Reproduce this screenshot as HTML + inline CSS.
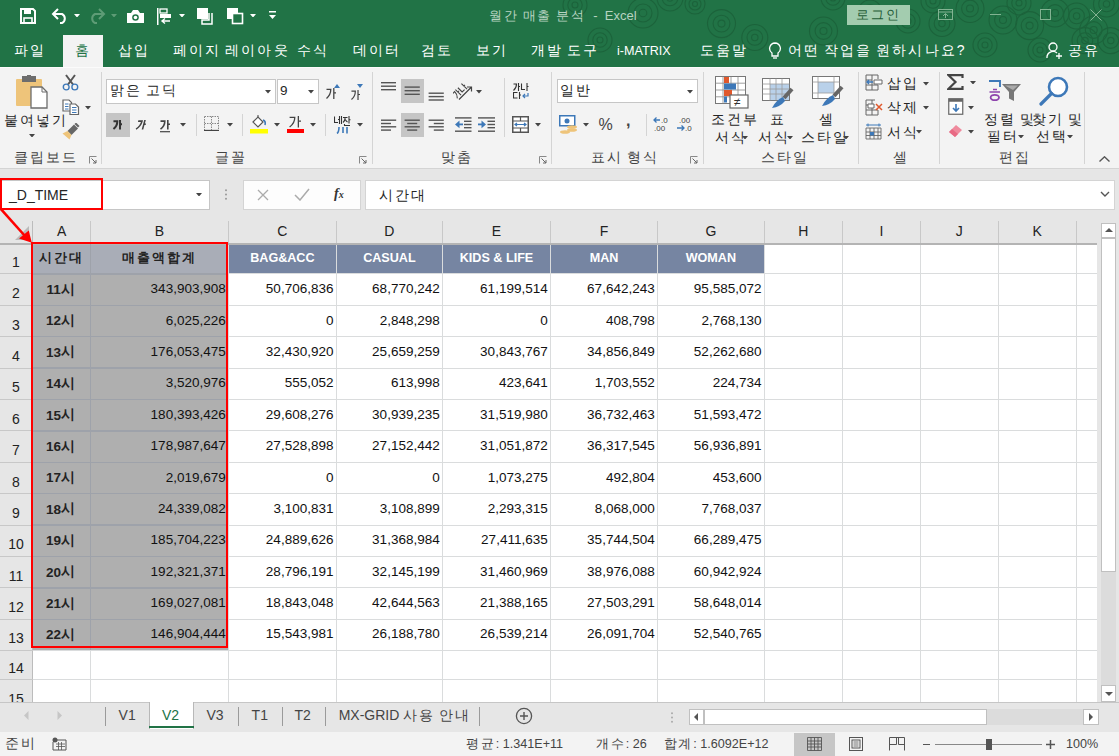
<!DOCTYPE html>
<html><head><meta charset="utf-8"><style>
*{margin:0;padding:0}
body{width:1119px;height:756px;overflow:hidden;position:relative;background:#e6e6e6;font-family:"Liberation Sans",sans-serif;}
.ab{position:absolute}
.t{position:absolute;white-space:nowrap}
.ko{letter-spacing:0.15em}
.ch{position:absolute;top:-1px;height:22px;line-height:22px;text-align:center;font-size:14px;color:#222}
.rh{position:absolute;left:0;width:32px;text-align:center;font-size:14px;color:#222;display:flex;align-items:flex-end;justify-content:center;padding-bottom:4px;box-sizing:border-box}
.cell{position:absolute;display:flex;align-items:center;font-size:13.5px;color:#111;white-space:nowrap;box-sizing:border-box}
.cell.num{justify-content:flex-end;padding-bottom:1.6px}
.cell.ctr{justify-content:center;font-weight:bold;color:#222}
.cell.hd{justify-content:center;font-weight:bold;color:#fff;font-size:12.6px}
.cell.hd.sel{color:#222}
</style></head>
<body>
<div class="ab" style="left:0px;top:0px;width:1119px;height:67px;background:#217346"></div>
<svg class="ab" style="left:540px;top:0px;" width="579" height="67" viewBox="0 0 579 67"><circle cx="103.0" cy="13.0" r="3.8" fill="none" stroke="#1c633b" stroke-width="1.1"/><circle cx="103.0" cy="13.0" r="9.0" fill="none" stroke="#1c633b" stroke-width="1.1"/><circle cx="103.0" cy="13.0" r="15.0" fill="none" stroke="#1c633b" stroke-width="1.1"/><circle cx="130.0" cy="-2.0" r="3.2" fill="none" stroke="#1c633b" stroke-width="1.1"/><circle cx="130.0" cy="-2.0" r="7.8" fill="none" stroke="#1c633b" stroke-width="1.1"/><circle cx="130.0" cy="-2.0" r="13.0" fill="none" stroke="#1c633b" stroke-width="1.1"/><circle cx="181.5" cy="23.6" r="3.5" fill="none" stroke="#1c633b" stroke-width="1.1"/><circle cx="181.5" cy="23.6" r="8.4" fill="none" stroke="#1c633b" stroke-width="1.1"/><circle cx="181.5" cy="23.6" r="14.0" fill="none" stroke="#1c633b" stroke-width="1.1"/><circle cx="214.8" cy="37.5" r="3.2" fill="none" stroke="#1c633b" stroke-width="1.1"/><circle cx="214.8" cy="37.5" r="7.8" fill="none" stroke="#1c633b" stroke-width="1.1"/><circle cx="214.8" cy="37.5" r="13.0" fill="none" stroke="#1c633b" stroke-width="1.1"/><circle cx="155.0" cy="4.0" r="2.5" fill="none" stroke="#1c633b" stroke-width="1.1"/><circle cx="155.0" cy="4.0" r="6.0" fill="none" stroke="#1c633b" stroke-width="1.1"/><circle cx="155.0" cy="4.0" r="10.0" fill="none" stroke="#1c633b" stroke-width="1.1"/><circle cx="283.5" cy="31.0" r="3.5" fill="none" stroke="#1c633b" stroke-width="1.1"/><circle cx="283.5" cy="31.0" r="8.4" fill="none" stroke="#1c633b" stroke-width="1.1"/><circle cx="283.5" cy="31.0" r="14.0" fill="none" stroke="#1c633b" stroke-width="1.1"/><circle cx="293.0" cy="-2.0" r="3.0" fill="none" stroke="#1c633b" stroke-width="1.1"/><circle cx="293.0" cy="-2.0" r="7.2" fill="none" stroke="#1c633b" stroke-width="1.1"/><circle cx="293.0" cy="-2.0" r="12.0" fill="none" stroke="#1c633b" stroke-width="1.1"/><circle cx="330.0" cy="12.0" r="3.0" fill="none" stroke="#1c633b" stroke-width="1.1"/><circle cx="330.0" cy="12.0" r="7.2" fill="none" stroke="#1c633b" stroke-width="1.1"/><circle cx="330.0" cy="12.0" r="12.0" fill="none" stroke="#1c633b" stroke-width="1.1"/><circle cx="368.0" cy="21.0" r="3.0" fill="none" stroke="#1c633b" stroke-width="1.1"/><circle cx="368.0" cy="21.0" r="7.2" fill="none" stroke="#1c633b" stroke-width="1.1"/><circle cx="368.0" cy="21.0" r="12.0" fill="none" stroke="#1c633b" stroke-width="1.1"/><circle cx="393.0" cy="1.0" r="3.0" fill="none" stroke="#1c633b" stroke-width="1.1"/><circle cx="393.0" cy="1.0" r="7.2" fill="none" stroke="#1c633b" stroke-width="1.1"/><circle cx="393.0" cy="1.0" r="12.0" fill="none" stroke="#1c633b" stroke-width="1.1"/><circle cx="402.0" cy="23.5" r="3.2" fill="none" stroke="#1c633b" stroke-width="1.1"/><circle cx="402.0" cy="23.5" r="7.8" fill="none" stroke="#1c633b" stroke-width="1.1"/><circle cx="402.0" cy="23.5" r="13.0" fill="none" stroke="#1c633b" stroke-width="1.1"/><circle cx="430.0" cy="8.5" r="3.5" fill="none" stroke="#1c633b" stroke-width="1.1"/><circle cx="430.0" cy="8.5" r="8.4" fill="none" stroke="#1c633b" stroke-width="1.1"/><circle cx="430.0" cy="8.5" r="14.0" fill="none" stroke="#1c633b" stroke-width="1.1"/><circle cx="463.0" cy="20.0" r="3.5" fill="none" stroke="#1c633b" stroke-width="1.1"/><circle cx="463.0" cy="20.0" r="8.4" fill="none" stroke="#1c633b" stroke-width="1.1"/><circle cx="463.0" cy="20.0" r="14.0" fill="none" stroke="#1c633b" stroke-width="1.1"/><circle cx="479.0" cy="3.0" r="3.0" fill="none" stroke="#1c633b" stroke-width="1.1"/><circle cx="479.0" cy="3.0" r="7.2" fill="none" stroke="#1c633b" stroke-width="1.1"/><circle cx="479.0" cy="3.0" r="12.0" fill="none" stroke="#1c633b" stroke-width="1.1"/><circle cx="489.6" cy="25.6" r="3.5" fill="none" stroke="#1c633b" stroke-width="1.1"/><circle cx="489.6" cy="25.6" r="8.4" fill="none" stroke="#1c633b" stroke-width="1.1"/><circle cx="489.6" cy="25.6" r="14.0" fill="none" stroke="#1c633b" stroke-width="1.1"/><circle cx="515.0" cy="13.0" r="3.5" fill="none" stroke="#1c633b" stroke-width="1.1"/><circle cx="515.0" cy="13.0" r="8.4" fill="none" stroke="#1c633b" stroke-width="1.1"/><circle cx="515.0" cy="13.0" r="14.0" fill="none" stroke="#1c633b" stroke-width="1.1"/><circle cx="536.6" cy="16.0" r="3.2" fill="none" stroke="#1c633b" stroke-width="1.1"/><circle cx="536.6" cy="16.0" r="7.8" fill="none" stroke="#1c633b" stroke-width="1.1"/><circle cx="536.6" cy="16.0" r="13.0" fill="none" stroke="#1c633b" stroke-width="1.1"/><circle cx="566.5" cy="4.0" r="3.2" fill="none" stroke="#1c633b" stroke-width="1.1"/><circle cx="566.5" cy="4.0" r="7.8" fill="none" stroke="#1c633b" stroke-width="1.1"/><circle cx="566.5" cy="4.0" r="13.0" fill="none" stroke="#1c633b" stroke-width="1.1"/><circle cx="553.7" cy="30.0" r="3.5" fill="none" stroke="#1c633b" stroke-width="1.1"/><circle cx="553.7" cy="30.0" r="8.4" fill="none" stroke="#1c633b" stroke-width="1.1"/><circle cx="553.7" cy="30.0" r="14.0" fill="none" stroke="#1c633b" stroke-width="1.1"/><circle cx="570.8" cy="40.6" r="3.2" fill="none" stroke="#1c633b" stroke-width="1.1"/><circle cx="570.8" cy="40.6" r="7.8" fill="none" stroke="#1c633b" stroke-width="1.1"/><circle cx="570.8" cy="40.6" r="13.0" fill="none" stroke="#1c633b" stroke-width="1.1"/><circle cx="545.0" cy="40.6" r="3.2" fill="none" stroke="#1c633b" stroke-width="1.1"/><circle cx="545.0" cy="40.6" r="7.8" fill="none" stroke="#1c633b" stroke-width="1.1"/><circle cx="545.0" cy="40.6" r="13.0" fill="none" stroke="#1c633b" stroke-width="1.1"/><circle cx="445.0" cy="45.0" r="3.0" fill="none" stroke="#1c633b" stroke-width="1.1"/><circle cx="445.0" cy="45.0" r="7.2" fill="none" stroke="#1c633b" stroke-width="1.1"/><circle cx="445.0" cy="45.0" r="12.0" fill="none" stroke="#1c633b" stroke-width="1.1"/><circle cx="500.0" cy="50.0" r="3.0" fill="none" stroke="#1c633b" stroke-width="1.1"/><circle cx="500.0" cy="50.0" r="7.2" fill="none" stroke="#1c633b" stroke-width="1.1"/><circle cx="500.0" cy="50.0" r="12.0" fill="none" stroke="#1c633b" stroke-width="1.1"/><circle cx="60.0" cy="40.0" r="3.0" fill="none" stroke="#1c633b" stroke-width="1.1"/><circle cx="60.0" cy="40.0" r="7.2" fill="none" stroke="#1c633b" stroke-width="1.1"/><circle cx="60.0" cy="40.0" r="12.0" fill="none" stroke="#1c633b" stroke-width="1.1"/><circle cx="35.0" cy="5.0" r="3.0" fill="none" stroke="#1c633b" stroke-width="1.1"/><circle cx="35.0" cy="5.0" r="7.2" fill="none" stroke="#1c633b" stroke-width="1.1"/><circle cx="35.0" cy="5.0" r="12.0" fill="none" stroke="#1c633b" stroke-width="1.1"/></svg>
<svg class="ab" style="left:20px;top:8px;" width="16" height="16" viewBox="0 0 16 16"><path d="M1 1H13L15 3V15H1Z" fill="none" stroke="#fff" stroke-width="2"/><rect x="4" y="2" width="7" height="4" fill="#fff"/><rect x="4" y="10" width="8" height="5" fill="none" stroke="#fff" stroke-width="1.6"/></svg>
<svg class="ab" style="left:51px;top:8px;" width="18" height="16" viewBox="0 0 18 16"><path d="M3 6H11A5 5 0 0 1 11 15H9" fill="none" stroke="#fff" stroke-width="2"/><path d="M7 1L2 6L7 11" fill="none" stroke="#fff" stroke-width="2"/></svg>
<svg class="ab" style="left:73.5px;top:13.5px;" width="6" height="3.5" viewBox="0 0 6 3.5"><path d="M0 0H6L3 3.5Z" fill="#fff"/></svg>
<svg class="ab" style="left:88px;top:8px;" width="18" height="16" viewBox="0 0 18 16"><path d="M15 6H7A5 5 0 0 0 7 15H9" fill="none" stroke="#5e9c76" stroke-width="2"/><path d="M11 1L16 6L11 11" fill="none" stroke="#5e9c76" stroke-width="2"/></svg>
<svg class="ab" style="left:111px;top:13.5px;" width="6" height="3.5" viewBox="0 0 6 3.5"><path d="M0 0H6L3 3.5Z" fill="#5e9c76"/></svg>
<svg class="ab" style="left:126px;top:9px;" width="19" height="15" viewBox="0 0 19 15"><path d="M1 4H5L7 1H12L14 4H18V14H1Z" fill="#fff"/><circle cx="9.5" cy="8.5" r="3.3" fill="#217346"/><circle cx="9.5" cy="8.5" r="1.8" fill="#fff"/></svg>
<svg class="ab" style="left:157px;top:8px;" width="15" height="17" viewBox="0 0 15 17"><rect x="0" y="0" width="1.5" height="17" fill="#fff"/><rect x="3" y="1" width="7" height="4" fill="none" stroke="#fff" stroke-width="1.3"/><rect x="3" y="6" width="11" height="4" fill="#fff"/><path d="M13 13H5M8 10.5L5 13L8 15.5" fill="none" stroke="#fff" stroke-width="1.4"/></svg>
<svg class="ab" style="left:178.5px;top:13.5px;" width="6" height="3.5" viewBox="0 0 6 3.5"><path d="M0 0H6L3 3.5Z" fill="#fff"/></svg>
<svg class="ab" style="left:197px;top:8px;" width="16" height="17" viewBox="0 0 16 17"><rect x="0" y="0" width="11" height="11" fill="#fff"/><path d="M12 5V12H5V16H15V5" fill="none" stroke="#fff" stroke-width="1.5"/></svg>
<svg class="ab" style="left:227px;top:8px;" width="17" height="17" viewBox="0 0 17 17"><rect x="0" y="0" width="11" height="11" fill="#fff"/><rect x="5.5" y="5.5" width="10" height="10" fill="#217346" stroke="#fff" stroke-width="1.6"/></svg>
<svg class="ab" style="left:249.5px;top:13.5px;" width="6" height="3.5" viewBox="0 0 6 3.5"><path d="M0 0H6L3 3.5Z" fill="#fff"/></svg>
<svg class="ab" style="left:269px;top:11px;" width="8" height="9" viewBox="0 0 8 9"><rect x="0" y="0" width="7" height="1.5" fill="#fff"/><path d="M0 4H7L3.5 8Z" fill="#fff"/></svg>
<div class="t" style="left:489px;top:8.2px;font-size:13px;line-height:15.6px;color:#b7d3c1;font-weight:normal;"><span class="ko">월간</span> <span class="ko">매출</span> <span class="ko">분석</span> &nbsp;- &nbsp;Excel</div>
<div class="ab" style="left:847px;top:5px;width:63px;height:20px;background:#a3ccaf"></div>
<div class="t" style="left:847px;top:7.2px;font-size:13px;line-height:15.6px;color:#1f5b36;font-weight:normal;width:63px;text-align:center;letter-spacing:1px"><span class="ko">로그인</span></div>
<svg class="ab" style="left:938px;top:9px;" width="15" height="11" viewBox="0 0 15 11"><rect x="0.5" y="0.5" width="14" height="10" fill="none" stroke="#82b392" stroke-width="1"/><path d="M1 3H14M7.5 9V5M5 7L7.5 4.5L10 7" fill="none" stroke="#82b392" stroke-width="1"/></svg>
<div class="ab" style="left:990px;top:14px;width:11px;height:1px;background:#82b392"></div>
<svg class="ab" style="left:1040px;top:9px;" width="11" height="11" viewBox="0 0 11 11"><rect x="0.5" y="0.5" width="10" height="10" fill="none" stroke="#82b392" stroke-width="1"/></svg>
<svg class="ab" style="left:1090px;top:9px;" width="12" height="12" viewBox="0 0 12 12"><path d="M0.5 0.5L11.5 11.5M11.5 0.5L0.5 11.5" stroke="#82b392" stroke-width="1"/></svg>
<div class="ab" style="left:63px;top:35px;width:40px;height:32px;background:#f3f3f3"></div>
<div class="t" style="left:14.3px;top:42.1px;font-size:14px;line-height:16.8px;color:#ffffff;font-weight:normal;"><span class="ko">파일</span></div>
<div class="t" style="left:75px;top:42.1px;font-size:14px;line-height:16.8px;color:#217346;font-weight:normal;"><span class="ko">홈</span></div>
<div class="t" style="left:118px;top:42.1px;font-size:14px;line-height:16.8px;color:#ffffff;font-weight:normal;"><span class="ko">삽입</span></div>
<div class="t" style="left:173px;top:42.1px;font-size:14px;line-height:16.8px;color:#ffffff;font-weight:normal;"><span class="ko">페이지</span> <span class="ko">레이아웃</span></div>
<div class="t" style="left:297px;top:42.1px;font-size:14px;line-height:16.8px;color:#ffffff;font-weight:normal;"><span class="ko">수식</span></div>
<div class="t" style="left:353px;top:42.1px;font-size:14px;line-height:16.8px;color:#ffffff;font-weight:normal;"><span class="ko">데이터</span></div>
<div class="t" style="left:421px;top:42.1px;font-size:14px;line-height:16.8px;color:#ffffff;font-weight:normal;"><span class="ko">검토</span></div>
<div class="t" style="left:476px;top:42.1px;font-size:14px;line-height:16.8px;color:#ffffff;font-weight:normal;"><span class="ko">보기</span></div>
<div class="t" style="left:531px;top:42.1px;font-size:14px;line-height:16.8px;color:#ffffff;font-weight:normal;"><span class="ko">개발</span> <span class="ko">도구</span></div>
<div class="t" style="left:617px;top:42.1px;font-size:14px;line-height:16.8px;color:#ffffff;font-weight:normal;"><span style="font-size:12.6px">i-MATRIX</span></div>
<div class="t" style="left:700px;top:42.1px;font-size:14px;line-height:16.8px;color:#ffffff;font-weight:normal;"><span class="ko">도움말</span></div>
<svg class="ab" style="left:768px;top:42px;" width="14" height="18" viewBox="0 0 14 18"><path d="M7 1A5.5 5.5 0 0 0 4 11V14H10V11A5.5 5.5 0 0 0 7 1Z" fill="none" stroke="#fff" stroke-width="1.3"/><path d="M5 16H9" stroke="#fff" stroke-width="1.3"/></svg>
<div class="t" style="left:788px;top:42.1px;font-size:14px;line-height:16.8px;color:#ffffff;font-weight:normal;"><span class="ko">어떤</span> <span class="ko">작업을</span> <span class="ko">원하시나요</span>?</div>
<svg class="ab" style="left:1046px;top:42px;" width="18" height="17" viewBox="0 0 18 17"><circle cx="7" cy="5" r="4" fill="none" stroke="#fff" stroke-width="1.3"/><path d="M1 16A6 6 0 0 1 11 11" fill="none" stroke="#fff" stroke-width="1.3"/><path d="M13 11V17M10 14H16" stroke="#fff" stroke-width="1.3"/></svg>
<div class="t" style="left:1068px;top:42.1px;font-size:14px;line-height:16.8px;color:#ffffff;font-weight:normal;"><span class="ko">공유</span></div>
<div class="ab" style="left:0px;top:67px;width:1119px;height:102px;background:#f3f3f3;border-bottom:1px solid #d4d4d4;border-top:1px solid #fbfbfb;box-sizing:border-box"></div>
<div class="ab" style="left:101.3px;top:72px;width:1px;height:92px;background:#d4d4d4"></div>
<div class="ab" style="left:372px;top:72px;width:1px;height:92px;background:#d4d4d4"></div>
<div class="ab" style="left:551.3px;top:72px;width:1px;height:92px;background:#d4d4d4"></div>
<div class="ab" style="left:703px;top:72px;width:1px;height:92px;background:#d4d4d4"></div>
<div class="ab" style="left:857.6px;top:72px;width:1px;height:92px;background:#d4d4d4"></div>
<div class="ab" style="left:938.7px;top:72px;width:1px;height:92px;background:#d4d4d4"></div>
<div class="ab" style="left:1083.8px;top:72px;width:1px;height:92px;background:#d4d4d4"></div>
<div class="ab" style="left:195.6px;top:114px;width:1px;height:22px;background:#d4d4d4"></div>
<div class="ab" style="left:241.8px;top:114px;width:1px;height:22px;background:#d4d4d4"></div>
<div class="ab" style="left:325.3px;top:114px;width:1px;height:22px;background:#d4d4d4"></div>
<div class="ab" style="left:503.8px;top:78px;width:1px;height:59px;background:#d4d4d4"></div>
<div class="ab" style="left:645.6px;top:114px;width:1px;height:22px;background:#d4d4d4"></div>
<div class="t" style="left:14.3px;top:149.9px;font-size:13.5px;line-height:16.2px;color:#444;font-weight:normal;"><span class="ko">클립보드</span></div>
<div class="t" style="left:215px;top:149.9px;font-size:13.5px;line-height:16.2px;color:#444;font-weight:normal;"><span class="ko">글꼴</span></div>
<div class="t" style="left:440.5px;top:149.9px;font-size:13.5px;line-height:16.2px;color:#444;font-weight:normal;"><span class="ko">맞춤</span></div>
<div class="t" style="left:590.7px;top:149.9px;font-size:13.5px;line-height:16.2px;color:#444;font-weight:normal;"><span class="ko">표시</span> <span class="ko">형식</span></div>
<div class="t" style="left:761px;top:149.9px;font-size:13.5px;line-height:16.2px;color:#444;font-weight:normal;"><span class="ko">스타일</span></div>
<div class="t" style="left:892.7px;top:149.9px;font-size:13.5px;line-height:16.2px;color:#444;font-weight:normal;"><span class="ko">셀</span></div>
<div class="t" style="left:999px;top:149.9px;font-size:13.5px;line-height:16.2px;color:#444;font-weight:normal;"><span class="ko">편집</span></div>
<svg class="ab" style="left:88.5px;top:156px;" width="8" height="8" viewBox="0 0 8 8"><path d="M0.5 7.5V0.5H7.5" fill="none" stroke="#888" stroke-width="1"/><path d="M2.5 2.5L7 7M7 4V7H4" fill="none" stroke="#666" stroke-width="1"/></svg>
<svg class="ab" style="left:359px;top:156px;" width="8" height="8" viewBox="0 0 8 8"><path d="M0.5 7.5V0.5H7.5" fill="none" stroke="#888" stroke-width="1"/><path d="M2.5 2.5L7 7M7 4V7H4" fill="none" stroke="#666" stroke-width="1"/></svg>
<svg class="ab" style="left:539px;top:156px;" width="8" height="8" viewBox="0 0 8 8"><path d="M0.5 7.5V0.5H7.5" fill="none" stroke="#888" stroke-width="1"/><path d="M2.5 2.5L7 7M7 4V7H4" fill="none" stroke="#666" stroke-width="1"/></svg>
<svg class="ab" style="left:690px;top:156px;" width="8" height="8" viewBox="0 0 8 8"><path d="M0.5 7.5V0.5H7.5" fill="none" stroke="#888" stroke-width="1"/><path d="M2.5 2.5L7 7M7 4V7H4" fill="none" stroke="#666" stroke-width="1"/></svg>
<svg class="ab" style="left:15px;top:75px;" width="33" height="35" viewBox="0 0 33 35"><rect x="1" y="4" width="26" height="27" rx="1" fill="#eec47a"/><path d="M7 1H21V7H7Z" fill="#6d6d6d"/><rect x="12" y="0" width="4" height="3" fill="#6d6d6d"/><path d="M16 12H27L32 17V33H16Z" fill="#fff" stroke="#6d6d6d" stroke-width="1.3"/><path d="M27 12V17H32" fill="none" stroke="#6d6d6d" stroke-width="1"/></svg>
<div class="t" style="left:3.6px;top:111.6px;font-size:14px;line-height:16.8px;color:#262626;font-weight:normal;"><span class="ko">붙여넣기</span></div>
<svg class="ab" style="left:29px;top:133.5px;" width="6" height="3.5" viewBox="0 0 6 3.5"><path d="M0 0H6L3 3.5Z" fill="#444"/></svg>
<svg class="ab" style="left:62px;top:74px;" width="17" height="17" viewBox="0 0 17 17"><path d="M4 1L11 10.5M13 1L6 10.5" stroke="#555" stroke-width="2"/><circle cx="4.2" cy="13" r="2.9" fill="none" stroke="#3d78b8" stroke-width="1.4"/><circle cx="12.8" cy="13" r="2.9" fill="none" stroke="#3d78b8" stroke-width="1.4"/></svg>
<svg class="ab" style="left:61.5px;top:99px;" width="18" height="16" viewBox="0 0 18 16"><path d="M1 1H7L9.5 3.5V12H1Z" fill="#fff" stroke="#666" stroke-width="1.2"/><path d="M8 5H13.5L16.5 8V15.5H8Z" fill="#fff" stroke="#666" stroke-width="1.2"/><path d="M3 5H6.5M3 7.5H6.5M3 10H6.5M10 8.5H14.5M10 11H14.5M10 13.5H14.5" stroke="#3d78b8" stroke-width="1"/></svg>
<svg class="ab" style="left:85px;top:106.0px;" width="6" height="3.5" viewBox="0 0 6 3.5"><path d="M0 0H6L3 3.5Z" fill="#444"/></svg>
<svg class="ab" style="left:62px;top:123px;" width="18" height="17" viewBox="0 0 18 17"><path d="M5.5 8L12 1.5L16 5.5L9.5 12Z" fill="#666"/><path d="M12.5 1L14 -0.5L17.5 3L16 4.5Z" fill="#666"/><path d="M0.5 10.5L5.5 8L9.5 12L7.5 16.5Z" fill="#eec47a"/></svg>
<div class="ab" style="left:106px;top:79px;width:170px;height:24.5px;background:#fff;border:1px solid #c6c6c6;box-sizing:border-box"></div>
<div class="t" style="left:110px;top:83.4px;font-size:13.5px;line-height:16.2px;color:#262626;font-weight:normal;"><span class="ko">맑은</span> <span class="ko">고딕</span></div>
<svg class="ab" style="left:265px;top:90.0px;" width="6" height="3.5" viewBox="0 0 6 3.5"><path d="M0 0H6L3 3.5Z" fill="#444"/></svg>
<div class="ab" style="left:276.5px;top:79px;width:42px;height:24.5px;background:#fff;border:1px solid #c6c6c6;box-sizing:border-box"></div>
<div class="t" style="left:280px;top:83.4px;font-size:13.5px;line-height:16.2px;color:#262626;font-weight:normal;">9</div>
<svg class="ab" style="left:308px;top:90.0px;" width="6" height="3.5" viewBox="0 0 6 3.5"><path d="M0 0H6L3 3.5Z" fill="#444"/></svg>
<svg class="ab" style="left:326px;top:88px;overflow:visible" width="13" height="15" viewBox="0 0 13 15"><g><path d="M0.50 1.32H4.80Q4.80 6.82 0.50 10.45M7.80 0V11.00M7.80 4.95H10.00" fill="none" stroke="#444" stroke-width="1.3"/></g></svg>
<svg class="ab" style="left:333.5px;top:83.5px;" width="6" height="4" viewBox="0 0 6 4"><path d="M0 4H6L3 0Z" fill="#3d78b8"/></svg>
<svg class="ab" style="left:351px;top:90px;overflow:visible" width="12" height="14" viewBox="0 0 12 14"><g><path d="M0.45 1.20H4.32Q4.32 6.20 0.45 9.50M7.02 0V10.00M7.02 4.50H9.00" fill="none" stroke="#444" stroke-width="1.2"/></g></svg>
<svg class="ab" style="left:357px;top:84px;" width="6" height="4" viewBox="0 0 6 4"><path d="M0 0H6L3 4Z" fill="#3d78b8"/></svg>
<div class="ab" style="left:106px;top:112.5px;width:23.5px;height:24.5px;background:#c5c5c5"></div>
<svg class="ab" style="left:113px;top:119.6px;overflow:visible" width="12" height="13.5" viewBox="0 0 12 13.5"><g><path d="M0.45 1.14H4.32Q4.32 5.89 0.45 9.03M7.02 0V9.50M7.02 4.28H9.00" fill="none" stroke="#333" stroke-width="2"/></g></svg>
<svg class="ab" style="left:138px;top:119.6px;overflow:visible" width="12" height="13.5" viewBox="0 0 12 13.5"><g transform="skewX(-15)"><path d="M0.45 1.14H4.32Q4.32 5.89 0.45 9.03M7.02 0V9.50M7.02 4.28H9.00" fill="none" stroke="#444" stroke-width="1.6"/></g></svg>
<svg class="ab" style="left:160px;top:119.6px;overflow:visible" width="13" height="13.5" viewBox="0 0 13 13.5"><g><path d="M0.50 1.14H4.80Q4.80 5.89 0.50 9.03M7.80 0V9.50M7.80 4.28H10.00" fill="none" stroke="#444" stroke-width="1.6"/></g><path d="M0 11.70H10.00" stroke="#444" stroke-width="1.2"/></svg>
<svg class="ab" style="left:180px;top:123.0px;" width="6" height="3.5" viewBox="0 0 6 3.5"><path d="M0 0H6L3 3.5Z" fill="#444"/></svg>
<svg class="ab" style="left:204px;top:116px;" width="15" height="15" viewBox="0 0 15 15"><path d="M0.5 0.5H14.5V14.5M7.5 0.5V14.5M0.5 7.5H14.5M0.5 0.5V14.5" fill="none" stroke="#888" stroke-width="1" stroke-dasharray="1.5 1"/><path d="M0 14.5H15" stroke="#444" stroke-width="1.3"/></svg>
<svg class="ab" style="left:227px;top:123.0px;" width="6" height="3.5" viewBox="0 0 6 3.5"><path d="M0 0H6L3 3.5Z" fill="#444"/></svg>
<svg class="ab" style="left:250px;top:115px;" width="18" height="19" viewBox="0 0 18 19"><path d="M3 7L8 2L13 7L8 12Z" fill="#fff" stroke="#555" stroke-width="1.2"/><path d="M8 2V0" stroke="#555" stroke-width="1.1"/><path d="M13 5Q16 6 15 10" fill="none" stroke="#3d78b8" stroke-width="1.6"/><rect x="0" y="14" width="18" height="4.5" fill="#ffff00"/></svg>
<svg class="ab" style="left:273.6px;top:123.0px;" width="6" height="3.5" viewBox="0 0 6 3.5"><path d="M0 0H6L3 3.5Z" fill="#444"/></svg>
<svg class="ab" style="left:288.5px;top:115.5px;overflow:visible" width="15" height="15.5" viewBox="0 0 15 15.5"><g><path d="M0.60 1.38H5.76Q5.76 7.13 0.60 10.92M9.36 0V11.50M9.36 5.17H12.00" fill="none" stroke="#444" stroke-width="1.3"/></g></svg>
<div class="ab" style="left:287px;top:129px;width:17px;height:4.2px;background:#ff0000"></div>
<svg class="ab" style="left:310.4px;top:123.0px;" width="6" height="3.5" viewBox="0 0 6 3.5"><path d="M0 0H6L3 3.5Z" fill="#444"/></svg>
<svg class="ab" style="left:334px;top:116px;" width="17" height="18" viewBox="0 0 17 18"><path d="M0.5 0.5V6.5H4M5.5 0V8M7.5 0V8M5.5 3.5H4" fill="none" stroke="#333" stroke-width="1.1"/><path d="M9 1.5H13.5M11.2 1.5Q11 5 9 6.5M11.2 3.5Q12 5 13.5 6M15 0V7.5M15 3.8H16.5M10.5 8V9.5H16" fill="none" stroke="#333" stroke-width="1.1"/><path d="M5 11Q5 16 3 17.5M9 11V17M13 11V17.5" fill="none" stroke="#3d78b8" stroke-width="1.6"/></svg>
<svg class="ab" style="left:356.8px;top:123.0px;" width="6" height="3.5" viewBox="0 0 6 3.5"><path d="M0 0H6L3 3.5Z" fill="#444"/></svg>
<div class="ab" style="left:400.6px;top:79.2px;width:23.4px;height:24.3px;background:#c5c5c5"></div>
<div class="ab" style="left:400.6px;top:112.5px;width:23.4px;height:24.5px;background:#c5c5c5"></div>
<svg class="ab" style="left:380px;top:80px;" width="120" height="60" viewBox="0 0 120 60"><rect x="1.0" y="2.0" width="15.0" height="1.4" fill="#555"/><rect x="24.6" y="6.4" width="15.2" height="1.4" fill="#555"/><rect x="48.6" y="12.5" width="15.2" height="1.4" fill="#555"/><rect x="1.0" y="5.5" width="15.0" height="1.4" fill="#555"/><rect x="24.6" y="10.0" width="15.2" height="1.4" fill="#555"/><rect x="48.6" y="15.9" width="15.2" height="1.4" fill="#555"/><rect x="1.0" y="9.0" width="15.0" height="1.4" fill="#555"/><rect x="24.6" y="13.6" width="15.2" height="1.4" fill="#555"/><rect x="48.6" y="19.3" width="15.2" height="1.4" fill="#555"/><rect x="1.0" y="39.5" width="15.2" height="1.4" fill="#555"/><rect x="24.6" y="39.5" width="15.2" height="1.4" fill="#555"/><rect x="48.6" y="39.5" width="15.2" height="1.4" fill="#555"/><rect x="1.0" y="42.8" width="10.0" height="1.4" fill="#555"/><rect x="27.2" y="42.8" width="10.0" height="1.4" fill="#555"/><rect x="53.8" y="42.8" width="10.0" height="1.4" fill="#555"/><rect x="1.0" y="46.1" width="15.2" height="1.4" fill="#555"/><rect x="24.6" y="46.1" width="15.2" height="1.4" fill="#555"/><rect x="48.6" y="46.1" width="15.2" height="1.4" fill="#555"/><rect x="1.0" y="49.4" width="10.0" height="1.4" fill="#555"/><rect x="27.2" y="49.4" width="10.0" height="1.4" fill="#555"/><rect x="53.8" y="49.4" width="10.0" height="1.4" fill="#555"/><rect x="75.0" y="37.2" width="16.5" height="1.4" fill="#555"/><rect x="75.0" y="50.5" width="16.5" height="1.4" fill="#555"/><rect x="84.0" y="40.6" width="7.5" height="1.4" fill="#555"/><rect x="84.0" y="43.8" width="7.5" height="1.4" fill="#555"/><rect x="84.0" y="47.0" width="7.5" height="1.4" fill="#555"/><path d="M75 44.4L79.5 40.6V48.2Z" fill="#3d78b8"/><rect x="78.0" y="43.5" width="5.0" height="1.8" fill="#3d78b8"/><rect x="98.0" y="37.2" width="17.0" height="1.4" fill="#555"/><rect x="98.0" y="50.5" width="17.0" height="1.4" fill="#555"/><rect x="107.5" y="40.6" width="7.5" height="1.4" fill="#555"/><rect x="107.5" y="43.8" width="7.5" height="1.4" fill="#555"/><rect x="107.5" y="47.0" width="7.5" height="1.4" fill="#555"/><path d="M106 44.4L101.5 40.6V48.2Z" fill="#3d78b8"/><rect x="98.0" y="43.5" width="5.0" height="1.8" fill="#3d78b8"/></svg>
<svg class="ab" style="left:453px;top:82px;" width="20" height="18" viewBox="0 0 20 18"><g transform="rotate(-45 7 10)"><path d="M0.5 6H3.5Q3.5 10 0.5 12.5M5.5 5V13M5.5 8.5H7M8.5 5.5V11.5H12M14 5V13M14 8.5H15.5" fill="none" stroke="#444" stroke-width="1.1"/></g><path d="M6 17.5L18 5.5M14 5H18.5V9.5" fill="none" stroke="#444" stroke-width="1.2"/></svg>
<svg class="ab" style="left:475.7px;top:90.0px;" width="6" height="3.5" viewBox="0 0 6 3.5"><path d="M0 0H6L3 3.5Z" fill="#444"/></svg>
<svg class="ab" style="left:512.5px;top:83px;" width="17" height="16" viewBox="0 0 17 16"><path d="M0.5 1H3.5Q3.5 5 0.5 7.5M5.5 0V8M5.5 3.5H7M8.5 0.5V6.5H12M14 0V8M14 3.5H15.5M4.5 9.5H0.5V15H4.5M6.5 9V16M6.5 12H8" fill="none" stroke="#333" stroke-width="1.1"/></svg>
<svg class="ab" style="left:522px;top:92.5px;" width="8" height="6" viewBox="0 0 8 6"><path d="M6 0V3H1M3 1L1 3L3 5" fill="none" stroke="#3d78b8" stroke-width="1.2"/></svg>
<svg class="ab" style="left:511.5px;top:116px;" width="17" height="17" viewBox="0 0 17 17"><rect x="0.75" y="0.75" width="15.5" height="15.5" fill="#fff" stroke="#555" stroke-width="1.5"/><path d="M1 5H16M1 12H16M8.5 1V5M8.5 12V16" stroke="#555" stroke-width="1.2"/><path d="M3 8.5H14M5 7L3 8.5L5 10M12 7L14 8.5L12 10" fill="none" stroke="#3d78b8" stroke-width="1.2"/></svg>
<svg class="ab" style="left:535px;top:123.0px;" width="6" height="3.5" viewBox="0 0 6 3.5"><path d="M0 0H6L3 3.5Z" fill="#444"/></svg>
<div class="ab" style="left:556.5px;top:79.2px;width:141.2px;height:24.3px;background:#fff;border:1px solid #c6c6c6;box-sizing:border-box"></div>
<div class="t" style="left:560px;top:83.4px;font-size:13.5px;line-height:16.2px;color:#262626;font-weight:normal;"><span class="ko">일반</span></div>
<svg class="ab" style="left:686.6px;top:90.0px;" width="6" height="3.5" viewBox="0 0 6 3.5"><path d="M0 0H6L3 3.5Z" fill="#444"/></svg>
<svg class="ab" style="left:559px;top:115px;" width="19" height="19" viewBox="0 0 19 19"><rect x="0.75" y="0.75" width="15" height="10" fill="#fff" stroke="#3d78b8" stroke-width="1.5"/><circle cx="8" cy="6" r="2.5" fill="#3d78b8"/><ellipse cx="13" cy="12" rx="5" ry="1.8" fill="#eec47a"/><ellipse cx="13" cy="15" rx="5" ry="1.8" fill="#eec47a"/><ellipse cx="6" cy="17" rx="5" ry="1.8" fill="#eec47a"/></svg>
<svg class="ab" style="left:582.6px;top:123.0px;" width="6" height="3.5" viewBox="0 0 6 3.5"><path d="M0 0H6L3 3.5Z" fill="#444"/></svg>
<div class="t" style="left:598.4px;top:115.4px;font-size:16px;line-height:19.2px;color:#444;font-weight:normal;">%</div>
<div class="t" style="left:626px;top:111.4px;font-size:16px;line-height:19.2px;color:#444;font-weight:bold;">,</div>
<svg class="ab" style="left:653px;top:116px;" width="17" height="16" viewBox="0 0 17 16"><path d="M1 4H7M3.5 1.5L1 4L3.5 6.5" fill="none" stroke="#3d78b8" stroke-width="1.3"/><text x="8" y="7" font-size="8" fill="#444" font-family="Liberation Sans">.0</text><text x="1" y="15" font-size="8" fill="#444" font-family="Liberation Sans">.00</text></svg>
<svg class="ab" style="left:677px;top:116px;" width="17" height="16" viewBox="0 0 17 16"><text x="2" y="7" font-size="8" fill="#444" font-family="Liberation Sans">.00</text><path d="M0 12H7M4.5 9.5L7 12L4.5 14.5" fill="none" stroke="#3d78b8" stroke-width="1.3"/><text x="8" y="15" font-size="8" fill="#444" font-family="Liberation Sans">.0</text></svg>
<svg class="ab" style="left:715px;top:75.5px;" width="34" height="33" viewBox="0 0 34 33"><rect x="0.5" y="0.5" width="30" height="27" fill="#fff" stroke="#777" stroke-width="1"/><path d="M0.5 7.2H30.5" stroke="#888" stroke-width="0.8"/><path d="M0.5 14.0H30.5" stroke="#888" stroke-width="0.8"/><path d="M0.5 20.8H30.5" stroke="#888" stroke-width="0.8"/><path d="M8 0.5V27.5" stroke="#888" stroke-width="0.8"/><path d="M16 0.5V27.5" stroke="#888" stroke-width="0.8"/><path d="M23 0.5V27.5" stroke="#888" stroke-width="0.8"/><rect x="9" y="1" width="5" height="6" fill="#e0582c"/><rect x="9" y="7.5" width="12" height="6" fill="#3d78b8"/><rect x="9" y="14" width="8" height="6" fill="#e0582c"/><rect x="9" y="20.5" width="3" height="6" fill="#3d78b8"/><rect x="15" y="19" width="18" height="13" fill="#fff" stroke="#666" stroke-width="1.2"/><text x="19" y="30" font-size="12" fill="#333" font-family="Liberation Sans">≠</text></svg>
<div class="t" style="left:711px;top:110.9px;font-size:14px;line-height:16.8px;color:#262626;font-weight:normal;"><span class="ko">조건부</span></div>
<div class="t" style="left:715px;top:128.6px;font-size:14px;line-height:16.8px;color:#262626;font-weight:normal;"><span class="ko">서식</span></div>
<svg class="ab" style="left:742px;top:135.5px;" width="6" height="3.5" viewBox="0 0 6 3.5"><path d="M0 0H6L3 3.5Z" fill="#444"/></svg>
<svg class="ab" style="left:762px;top:78px;" width="32" height="31" viewBox="0 0 32 31"><rect x="0.5" y="0.5" width="27" height="22" fill="#fff" stroke="#777"/><rect x="8" y="6" width="19" height="16" fill="#b9d1ea"/><path d="M0.5 6H27.5" stroke="#999" stroke-width="0.8"/><path d="M0.5 11H27.5" stroke="#999" stroke-width="0.8"/><path d="M0.5 16H27.5" stroke="#999" stroke-width="0.8"/><path d="M8 0.5V22.5" stroke="#999" stroke-width="0.8"/><path d="M14 0.5V22.5" stroke="#999" stroke-width="0.8"/><path d="M20 0.5V22.5" stroke="#999" stroke-width="0.8"/><path d="M30 11L22 20" stroke="#666" stroke-width="4"/><path d="M21 19Q14 22 10 30Q18 29 23 23Z" fill="#3d78b8"/></svg>
<div class="t" style="left:770px;top:110.9px;font-size:14px;line-height:16.8px;color:#262626;font-weight:normal;"><span class="ko">표</span></div>
<div class="t" style="left:758px;top:128.6px;font-size:14px;line-height:16.8px;color:#262626;font-weight:normal;"><span class="ko">서식</span></div>
<svg class="ab" style="left:787px;top:135.5px;" width="6" height="3.5" viewBox="0 0 6 3.5"><path d="M0 0H6L3 3.5Z" fill="#444"/></svg>
<svg class="ab" style="left:812px;top:76px;" width="32" height="31" viewBox="0 0 32 31"><rect x="0.5" y="0.5" width="27" height="22" fill="#fff" stroke="#777"/><rect x="6" y="6" width="16" height="11" fill="#b9d1ea"/><path d="M0.5 6H27.5M0.5 17H27.5M6 0.5V22.5M22 0.5V22.5" stroke="#999" stroke-width="0.8"/><path d="M30 11L22 20" stroke="#666" stroke-width="4"/><path d="M21 19Q14 22 10 30Q18 29 23 23Z" fill="#3d78b8"/></svg>
<div class="t" style="left:819px;top:110.9px;font-size:14px;line-height:16.8px;color:#262626;font-weight:normal;"><span class="ko">셀</span></div>
<div class="t" style="left:801px;top:128.6px;font-size:14px;line-height:16.8px;color:#262626;font-weight:normal;"><span class="ko">스타일</span></div>
<svg class="ab" style="left:843px;top:135.5px;" width="6" height="3.5" viewBox="0 0 6 3.5"><path d="M0 0H6L3 3.5Z" fill="#444"/></svg>
<svg class="ab" style="left:865px;top:74px;" width="18" height="17" viewBox="0 0 18 17"><path d="M1 1H7V16H1ZM1 6H7M1 11H7M7 11H13V16H7M7 1H13V5" fill="none" stroke="#666" stroke-width="1"/><path d="M9 6H17V10H9Z" fill="#fff" stroke="#666" stroke-width="1"/><path d="M2 8H8M4 6L2 8L4 10" fill="none" stroke="#3d78b8" stroke-width="1.4"/></svg>
<div class="t" style="left:887px;top:75.1px;font-size:14px;line-height:16.8px;color:#262626;font-weight:normal;"><span class="ko">삽입</span></div>
<svg class="ab" style="left:922.7px;top:82.0px;" width="6" height="3.5" viewBox="0 0 6 3.5"><path d="M0 0H6L3 3.5Z" fill="#444"/></svg>
<svg class="ab" style="left:865px;top:99px;" width="18" height="17" viewBox="0 0 18 17"><path d="M1 1H7V16H1ZM1 6H7M1 11H7M7 11H13V16H7M7 1H10" fill="none" stroke="#666" stroke-width="1"/><path d="M3 5H9V9H3Z" fill="#fff" stroke="#666" stroke-width="1"/><path d="M11 5L17 11M17 5L11 11" stroke="#e0582c" stroke-width="1.5"/></svg>
<div class="t" style="left:887px;top:99.2px;font-size:14px;line-height:16.8px;color:#262626;font-weight:normal;"><span class="ko">삭제</span></div>
<svg class="ab" style="left:922.7px;top:106.1px;" width="6" height="3.5" viewBox="0 0 6 3.5"><path d="M0 0H6L3 3.5Z" fill="#444"/></svg>
<svg class="ab" style="left:865px;top:123px;" width="18" height="17" viewBox="0 0 18 17"><path d="M1 2H16M3 0.5V3.5M14 0.5V3.5" stroke="#3d78b8" stroke-width="1"/><path d="M1 5H16V16H1ZM1 9H16M1 12.5H16M5 5V16M9 5V16M13 5V16" fill="none" stroke="#666" stroke-width="0.9"/><rect x="5" y="9" width="4" height="3.5" fill="#3d78b8"/></svg>
<div class="t" style="left:887px;top:123.5px;font-size:14px;line-height:16.8px;color:#262626;font-weight:normal;"><span class="ko">서식</span></div>
<svg class="ab" style="left:916px;top:130.4px;" width="6" height="3.5" viewBox="0 0 6 3.5"><path d="M0 0H6L3 3.5Z" fill="#444"/></svg>
<svg class="ab" style="left:947px;top:74px;" width="17" height="16" viewBox="0 0 17 16"><path d="M15.5 4V1.2H1.5L8.5 8L1.5 14.8H15.5V12" fill="none" stroke="#444" stroke-width="2.2" stroke-linejoin="miter"/></svg>
<svg class="ab" style="left:970px;top:80.5px;" width="6" height="3.5" viewBox="0 0 6 3.5"><path d="M0 0H6L3 3.5Z" fill="#444"/></svg>
<svg class="ab" style="left:948px;top:98px;" width="16" height="17" viewBox="0 0 16 17"><rect x="0.75" y="0.75" width="14" height="15.5" fill="#fff" stroke="#666" stroke-width="1.2"/><rect x="0.75" y="0.75" width="14" height="3" fill="#666"/><path d="M8 6V13M5 10L8 13L11 10" fill="none" stroke="#3d78b8" stroke-width="1.6"/></svg>
<svg class="ab" style="left:967.6px;top:106.1px;" width="6" height="3.5" viewBox="0 0 6 3.5"><path d="M0 0H6L3 3.5Z" fill="#444"/></svg>
<svg class="ab" style="left:947px;top:124px;" width="16" height="14" viewBox="0 0 16 14"><path d="M9 1L15 6L8 13L2 8Z" fill="#ef8a9d"/><path d="M2 8L5 5L11 10L8 13Z" fill="#e86a84"/></svg>
<svg class="ab" style="left:967.6px;top:130.4px;" width="6" height="3.5" viewBox="0 0 6 3.5"><path d="M0 0H6L3 3.5Z" fill="#444"/></svg>
<svg class="ab" style="left:988px;top:79px;" width="34" height="23" viewBox="0 0 34 23"><path d="M1 2H12V8" fill="none" stroke="#3d78b8" stroke-width="1.9"/><path d="M5 10.5H9M1.5 13H12" stroke="#8e44ad" stroke-width="1.6"/><ellipse cx="6.8" cy="18.5" rx="4.2" ry="2.7" fill="none" stroke="#8e44ad" stroke-width="1.8"/><path d="M14 5H33L26 13V22L21 19.5V13Z" fill="#777"/><path d="M17 6.5H30L25 11" fill="#aaa"/></svg>
<div class="t" style="left:983.5px;top:111.0px;font-size:14px;line-height:16.8px;color:#262626;font-weight:normal;"><span class="ko">정렬</span> <span class="ko">및</span></div>
<div class="t" style="left:987px;top:127.6px;font-size:14px;line-height:16.8px;color:#262626;font-weight:normal;"><span class="ko">필터</span></div>
<svg class="ab" style="left:1018px;top:134.5px;" width="6" height="3.5" viewBox="0 0 6 3.5"><path d="M0 0H6L3 3.5Z" fill="#444"/></svg>
<svg class="ab" style="left:1039px;top:76px;" width="30" height="30" viewBox="0 0 30 30"><circle cx="19" cy="11" r="9" fill="#fff" stroke="#3d78b8" stroke-width="2.6"/><path d="M12.5 17.5L2 28" stroke="#3d78b8" stroke-width="3.2" stroke-linecap="round"/></svg>
<div class="t" style="left:1032px;top:111.0px;font-size:14px;line-height:16.8px;color:#262626;font-weight:normal;"><span class="ko">찾기</span> <span class="ko">및</span></div>
<div class="t" style="left:1036px;top:127.6px;font-size:14px;line-height:16.8px;color:#262626;font-weight:normal;"><span class="ko">선택</span></div>
<svg class="ab" style="left:1067px;top:134.5px;" width="6" height="3.5" viewBox="0 0 6 3.5"><path d="M0 0H6L3 3.5Z" fill="#444"/></svg>
<svg class="ab" style="left:1099px;top:156px;" width="11" height="6" viewBox="0 0 11 6"><path d="M0.5 5.5L5.5 0.8L10.5 5.5" fill="none" stroke="#555" stroke-width="1.4"/></svg>
<div class="ab" style="left:0px;top:169px;width:1119px;height:52px;background:#e6e6e6"></div>
<div class="ab" style="left:0px;top:180px;width:209.5px;height:29.5px;background:#fff;border:1px solid #c6c6c6;box-sizing:border-box"></div>
<div class="t" style="left:9px;top:187.1px;font-size:14px;line-height:16.8px;color:#262626;font-weight:normal;">_D_TIME</div>
<svg class="ab" style="left:195.6px;top:192.5px;" width="6" height="3.5" viewBox="0 0 6 3.5"><path d="M0 0H6L3 3.5Z" fill="#444"/></svg>
<svg class="ab" style="left:224px;top:189px;" width="4" height="11" viewBox="0 0 4 11"><circle cx="2" cy="1.2" r="1" fill="#999"/><circle cx="2" cy="5.5" r="1" fill="#999"/><circle cx="2" cy="9.8" r="1" fill="#999"/></svg>
<div class="ab" style="left:243px;top:180px;width:118px;height:29.5px;background:#fdfdfd;border:1px solid #d4d4d4;box-sizing:border-box"></div>
<svg class="ab" style="left:257px;top:189px;" width="12" height="12" viewBox="0 0 12 12"><path d="M1 1L11 11M11 1L1 11" stroke="#ababab" stroke-width="1.3"/></svg>
<svg class="ab" style="left:294px;top:188px;" width="16" height="13" viewBox="0 0 16 13"><path d="M1 7L6 12L15 1" fill="none" stroke="#ababab" stroke-width="1.5"/></svg>
<div class="t" style="left:334px;top:186.1px;font-size:14px;line-height:16.8px;color:#333;font-weight:bold;font-family:&quot;Liberation Serif&quot;,serif"><i>f</i><span style="font-size:10px"><i>x</i></span></div>
<div class="ab" style="left:365.4px;top:180px;width:749.5px;height:29.5px;background:#fff;border:1px solid #d4d4d4;box-sizing:border-box"></div>
<div class="t" style="left:378.8px;top:186.6px;font-size:14px;line-height:16.8px;color:#262626;font-weight:normal;"><span class="ko">시간대</span></div>
<svg class="ab" style="left:1100px;top:191px;" width="10" height="7" viewBox="0 0 10 7"><path d="M1 1L5 5L9 1" fill="none" stroke="#555" stroke-width="1.4"/></svg>
<div class="ab" style="left:0px;top:702px;width:1119px;height:30px;background:#e6e6e6;border-top:1px solid #c6c6c6;box-sizing:border-box"></div>
<svg class="ab" style="left:24px;top:711px;" width="5" height="9" viewBox="0 0 5 9"><path d="M4.5 0L0 4.5L4.5 9Z" fill="#c6c6c6"/></svg>
<svg class="ab" style="left:57px;top:711px;" width="5" height="9" viewBox="0 0 5 9"><path d="M0.5 0L5 4.5L0.5 9Z" fill="#c6c6c6"/></svg>
<div class="ab" style="left:104.9px;top:707px;width:1px;height:19px;background:#9a9a9a"></div>
<div class="ab" style="left:238px;top:707px;width:1px;height:19px;background:#9a9a9a"></div>
<div class="ab" style="left:281.6px;top:707px;width:1px;height:19px;background:#9a9a9a"></div>
<div class="ab" style="left:325.4px;top:707px;width:1px;height:19px;background:#9a9a9a"></div>
<div class="ab" style="left:479px;top:707px;width:1px;height:19px;background:#9a9a9a"></div>
<div class="ab" style="left:148.6px;top:701px;width:45.4px;height:28px;background:#fff;border-left:1px solid #b8b8b8;border-right:1px solid #b8b8b8;box-sizing:border-box"></div>
<div class="ab" style="left:148.6px;top:726px;width:45.1px;height:2px;background:#217346"></div>
<div class="t" style="left:118.6px;top:706.6px;font-size:14px;line-height:16.8px;color:#444;font-weight:normal;">V1</div>
<div class="t" style="left:162px;top:706.6px;font-size:14px;line-height:16.8px;color:#217346;font-weight:normal;">V2</div>
<div class="t" style="left:206.5px;top:706.6px;font-size:14px;line-height:16.8px;color:#444;font-weight:normal;">V3</div>
<div class="t" style="left:251.6px;top:706.6px;font-size:14px;line-height:16.8px;color:#444;font-weight:normal;">T1</div>
<div class="t" style="left:294.5px;top:706.6px;font-size:14px;line-height:16.8px;color:#444;font-weight:normal;">T2</div>
<div class="t" style="left:338.7px;top:706.6px;font-size:14px;line-height:16.8px;color:#444;font-weight:normal;">MX-GRID <span class="ko">사용</span> <span class="ko">안내</span></div>
<svg class="ab" style="left:515px;top:707px;" width="18" height="18" viewBox="0 0 18 18"><circle cx="9" cy="9" r="7.6" fill="none" stroke="#555" stroke-width="1.3"/><path d="M9 5V13M5 9H13" stroke="#555" stroke-width="1.4"/></svg>
<svg class="ab" style="left:670px;top:712px;" width="4" height="11" viewBox="0 0 4 11"><circle cx="2" cy="1.2" r="1" fill="#aaa"/><circle cx="2" cy="5.5" r="1" fill="#aaa"/><circle cx="2" cy="9.8" r="1" fill="#aaa"/></svg>
<div class="ab" style="left:689px;top:709.3px;width:410px;height:15.7px;background:#dcdcdc"></div>
<div class="ab" style="left:689px;top:709.3px;width:15px;height:15.7px;background:#fff;border:1px solid #c0c0c0;box-sizing:border-box"></div>
<svg class="ab" style="left:694px;top:713px;" width="4" height="8" viewBox="0 0 4 8"><path d="M4 0L0 4L4 8Z" fill="#555"/></svg>
<div class="ab" style="left:704px;top:709.3px;width:283px;height:15.7px;background:#fff;border:1px solid #c0c0c0;box-sizing:border-box"></div>
<div class="ab" style="left:1083px;top:709.3px;width:16px;height:15.7px;background:#fff;border:1px solid #c0c0c0;box-sizing:border-box"></div>
<svg class="ab" style="left:1089px;top:713px;" width="4" height="8" viewBox="0 0 4 8"><path d="M0 0L4 4L0 8Z" fill="#555"/></svg>
<div class="ab" style="left:1097px;top:221px;width:22px;height:481px;background:#e6e6e6"></div>
<div class="ab" style="left:1101px;top:223px;width:15px;height:462px;background:#dcdcdc"></div>
<div class="ab" style="left:1101px;top:223px;width:15px;height:15px;background:#fff;border:1px solid #c0c0c0;box-sizing:border-box"></div>
<svg class="ab" style="left:1104.5px;top:228px;" width="8" height="4" viewBox="0 0 8 4"><path d="M0 4L4 0L8 4Z" fill="#555"/></svg>
<div class="ab" style="left:1101px;top:238px;width:15px;height:334.4px;background:#fff;border:1px solid #c0c0c0;box-sizing:border-box"></div>
<div class="ab" style="left:1101px;top:685px;width:15px;height:17px;background:#fff;border:1px solid #c0c0c0;box-sizing:border-box"></div>
<svg class="ab" style="left:1104.5px;top:692px;" width="8" height="4" viewBox="0 0 8 4"><path d="M0 0L4 4L8 0Z" fill="#555"/></svg>
<div class="ab" style="left:0px;top:732px;width:1119px;height:24px;background:#f3f3f3"></div>
<div class="t" style="left:5px;top:735.9px;font-size:13.5px;line-height:16.2px;color:#444;font-weight:normal;"><span class="ko">준비</span></div>
<svg class="ab" style="left:52px;top:737px;" width="15" height="14" viewBox="0 0 15 14"><circle cx="3" cy="3" r="2.5" fill="#555"/><path d="M5 3H14V13H1V5" fill="none" stroke="#555" stroke-width="1"/><path d="M4 7H13M4 9.5H13M6.5 5V13M9.5 5V13" stroke="#555" stroke-width="0.8"/></svg>
<div class="t" style="left:466px;top:736.8px;font-size:12.6px;line-height:15.1px;color:#444;font-weight:normal;"><span class="ko">평균</span>: 1.341E+11</div>
<div class="t" style="left:596px;top:736.8px;font-size:12.6px;line-height:15.1px;color:#444;font-weight:normal;"><span class="ko">개수</span>: 26</div>
<div class="t" style="left:663.5px;top:736.8px;font-size:12.6px;line-height:15.1px;color:#444;font-weight:normal;"><span class="ko">합계</span>: 1.6092E+12</div>
<div class="ab" style="left:794px;top:732.8px;width:41px;height:23.2px;background:#c6c6c6"></div>
<svg class="ab" style="left:807px;top:737px;" width="15" height="14" viewBox="0 0 15 14"><path d="M0.5 0.5H14.5V13.5H0.5ZM0.5 4H14.5M0.5 7H14.5M0.5 10H14.5M4 0.5V13.5M7.5 0.5V13.5M11 0.5V13.5" fill="none" stroke="#555" stroke-width="0.9"/></svg>
<svg class="ab" style="left:848.5px;top:737px;" width="14" height="14" viewBox="0 0 14 14"><rect x="0.5" y="0.5" width="13" height="13" fill="none" stroke="#555"/><rect x="3" y="3" width="8" height="8" fill="none" stroke="#555"/><path d="M4.5 5H9.5M4.5 7H9.5M4.5 9H9.5" stroke="#555" stroke-width="0.8"/></svg>
<svg class="ab" style="left:889px;top:737px;" width="16" height="14" viewBox="0 0 16 14"><path d="M0.5 13.5V0.5H15.5V13.5M0.5 7.5H7.5V0.5M15.5 7.5H9.5V0.5" fill="none" stroke="#555" stroke-width="1"/></svg>
<div class="ab" style="left:922.5px;top:743.5px;width:7.5px;height:1.6px;background:#555"></div>
<div class="ab" style="left:935px;top:744px;width:107px;height:1px;background:#888"></div>
<div class="ab" style="left:986px;top:739px;width:6px;height:11px;background:#555"></div>
<svg class="ab" style="left:1046px;top:740px;" width="9" height="9" viewBox="0 0 9 9"><path d="M4.5 0V9M0 4.5H9" stroke="#555" stroke-width="1.5"/></svg>
<div class="t" style="left:1066px;top:736.8px;font-size:12.6px;line-height:15.1px;color:#444;font-weight:normal;">100%</div>
<div id="grid" style="position:absolute;left:0;top:221px;width:1097px;height:481px;overflow:hidden;background:#fff">
<div style="position:absolute;left:0;top:0;width:1097px;height:22px;background:#e6e6e6"></div>
<div style="position:absolute;left:0;top:0;width:33px;height:481px;background:#e6e6e6;border-right:1px solid #bcbcbc;box-sizing:border-box"></div>
<svg style="position:absolute;left:14px;top:4px" width="16" height="16"><path d="M15 1 L15 15 L1 15 Z" fill="#bababa"/></svg>
<div style="position:absolute;left:228.50px;top:21.50px;width:107.75px;height:31.40px;background:#7685a2"></div>
<div style="position:absolute;left:336.25px;top:21.50px;width:106.25px;height:31.40px;background:#7685a2"></div>
<div style="position:absolute;left:442.50px;top:21.50px;width:108.00px;height:31.40px;background:#7685a2"></div>
<div style="position:absolute;left:550.50px;top:21.50px;width:107.00px;height:31.40px;background:#7685a2"></div>
<div style="position:absolute;left:657.50px;top:21.50px;width:106.75px;height:31.40px;background:#7685a2"></div>
<div style="position:absolute;left:32.70px;top:21.50px;width:195.80px;height:31.40px;background:#a9adb7"></div>
<div style="position:absolute;left:32.70px;top:52.90px;width:195.80px;height:376.30px;background:#afafaf"></div>
<div style="position:absolute;left:0;top:52.40px;width:33px;height:1px;background:#c8c8c8"></div>
<div style="position:absolute;left:33px;top:52.40px;width:1064px;height:1px;background:#dadcdd"></div>
<div style="position:absolute;left:0;top:83.80px;width:33px;height:1px;background:#c8c8c8"></div>
<div style="position:absolute;left:33px;top:83.80px;width:1064px;height:1px;background:#dadcdd"></div>
<div style="position:absolute;left:0;top:115.20px;width:33px;height:1px;background:#c8c8c8"></div>
<div style="position:absolute;left:33px;top:115.20px;width:1064px;height:1px;background:#dadcdd"></div>
<div style="position:absolute;left:0;top:146.60px;width:33px;height:1px;background:#c8c8c8"></div>
<div style="position:absolute;left:33px;top:146.60px;width:1064px;height:1px;background:#dadcdd"></div>
<div style="position:absolute;left:0;top:178.00px;width:33px;height:1px;background:#c8c8c8"></div>
<div style="position:absolute;left:33px;top:178.00px;width:1064px;height:1px;background:#dadcdd"></div>
<div style="position:absolute;left:0;top:209.40px;width:33px;height:1px;background:#c8c8c8"></div>
<div style="position:absolute;left:33px;top:209.40px;width:1064px;height:1px;background:#dadcdd"></div>
<div style="position:absolute;left:0;top:240.80px;width:33px;height:1px;background:#c8c8c8"></div>
<div style="position:absolute;left:33px;top:240.80px;width:1064px;height:1px;background:#dadcdd"></div>
<div style="position:absolute;left:0;top:272.20px;width:33px;height:1px;background:#c8c8c8"></div>
<div style="position:absolute;left:33px;top:272.20px;width:1064px;height:1px;background:#dadcdd"></div>
<div style="position:absolute;left:0;top:303.60px;width:33px;height:1px;background:#c8c8c8"></div>
<div style="position:absolute;left:33px;top:303.60px;width:1064px;height:1px;background:#dadcdd"></div>
<div style="position:absolute;left:0;top:335.00px;width:33px;height:1px;background:#c8c8c8"></div>
<div style="position:absolute;left:33px;top:335.00px;width:1064px;height:1px;background:#dadcdd"></div>
<div style="position:absolute;left:0;top:366.40px;width:33px;height:1px;background:#c8c8c8"></div>
<div style="position:absolute;left:33px;top:366.40px;width:1064px;height:1px;background:#dadcdd"></div>
<div style="position:absolute;left:0;top:397.80px;width:33px;height:1px;background:#c8c8c8"></div>
<div style="position:absolute;left:33px;top:397.80px;width:1064px;height:1px;background:#dadcdd"></div>
<div style="position:absolute;left:0;top:428.70px;width:33px;height:1px;background:#c8c8c8"></div>
<div style="position:absolute;left:33px;top:428.70px;width:1064px;height:1px;background:#dadcdd"></div>
<div style="position:absolute;left:0;top:458.20px;width:33px;height:1px;background:#c8c8c8"></div>
<div style="position:absolute;left:33px;top:458.20px;width:1064px;height:1px;background:#dadcdd"></div>
<div style="position:absolute;left:0;top:489.50px;width:33px;height:1px;background:#c8c8c8"></div>
<div style="position:absolute;left:33px;top:489.50px;width:1064px;height:1px;background:#dadcdd"></div>
<div style="position:absolute;left:90.00px;top:0;width:1px;height:22px;background:#c8c8c8"></div>
<div style="position:absolute;left:90.00px;top:22px;width:1px;height:459px;background:#dadcdd"></div>
<div style="position:absolute;left:228.00px;top:0;width:1px;height:22px;background:#c8c8c8"></div>
<div style="position:absolute;left:228.00px;top:22px;width:1px;height:459px;background:#dadcdd"></div>
<div style="position:absolute;left:335.75px;top:0;width:1px;height:22px;background:#c8c8c8"></div>
<div style="position:absolute;left:335.75px;top:22px;width:1px;height:459px;background:#dadcdd"></div>
<div style="position:absolute;left:442.00px;top:0;width:1px;height:22px;background:#c8c8c8"></div>
<div style="position:absolute;left:442.00px;top:22px;width:1px;height:459px;background:#dadcdd"></div>
<div style="position:absolute;left:550.00px;top:0;width:1px;height:22px;background:#c8c8c8"></div>
<div style="position:absolute;left:550.00px;top:22px;width:1px;height:459px;background:#dadcdd"></div>
<div style="position:absolute;left:657.00px;top:0;width:1px;height:22px;background:#c8c8c8"></div>
<div style="position:absolute;left:657.00px;top:22px;width:1px;height:459px;background:#dadcdd"></div>
<div style="position:absolute;left:763.75px;top:0;width:1px;height:22px;background:#c8c8c8"></div>
<div style="position:absolute;left:763.75px;top:22px;width:1px;height:459px;background:#dadcdd"></div>
<div style="position:absolute;left:842.10px;top:0;width:1px;height:22px;background:#c8c8c8"></div>
<div style="position:absolute;left:842.10px;top:22px;width:1px;height:459px;background:#dadcdd"></div>
<div style="position:absolute;left:919.80px;top:0;width:1px;height:22px;background:#c8c8c8"></div>
<div style="position:absolute;left:919.80px;top:22px;width:1px;height:459px;background:#dadcdd"></div>
<div style="position:absolute;left:997.50px;top:0;width:1px;height:22px;background:#c8c8c8"></div>
<div style="position:absolute;left:997.50px;top:22px;width:1px;height:459px;background:#dadcdd"></div>
<div style="position:absolute;left:1075.90px;top:0;width:1px;height:22px;background:#c8c8c8"></div>
<div style="position:absolute;left:1075.90px;top:22px;width:1px;height:459px;background:#dadcdd"></div>
<div style="position:absolute;left:0;top:22px;width:1097px;height:1.5px;background:#b4b4b4"></div>
<div class="ch" style="left:32.70px;width:57.80px">A</div>
<div class="ch" style="left:90.50px;width:138.00px">B</div>
<div class="ch" style="left:228.50px;width:107.75px">C</div>
<div class="ch" style="left:336.25px;width:106.25px">D</div>
<div class="ch" style="left:442.50px;width:108.00px">E</div>
<div class="ch" style="left:550.50px;width:107.00px">F</div>
<div class="ch" style="left:657.50px;width:106.75px">G</div>
<div class="ch" style="left:764.25px;width:78.35px">H</div>
<div class="ch" style="left:842.60px;width:77.70px">I</div>
<div class="ch" style="left:920.30px;width:77.70px">J</div>
<div class="ch" style="left:998.00px;width:78.40px">K</div>
<div class="ch" style="left:1076.40px;width:77.60px">L</div>
<div class="rh" style="top:21.50px;height:31.40px">1</div>
<div class="rh" style="top:52.90px;height:31.40px">2</div>
<div class="rh" style="top:84.30px;height:31.40px">3</div>
<div class="rh" style="top:115.70px;height:31.40px">4</div>
<div class="rh" style="top:147.10px;height:31.40px">5</div>
<div class="rh" style="top:178.50px;height:31.40px">6</div>
<div class="rh" style="top:209.90px;height:31.40px">7</div>
<div class="rh" style="top:241.30px;height:31.40px">8</div>
<div class="rh" style="top:272.70px;height:31.40px">9</div>
<div class="rh" style="top:304.10px;height:31.40px">10</div>
<div class="rh" style="top:335.50px;height:31.40px">11</div>
<div class="rh" style="top:366.90px;height:31.40px">12</div>
<div class="rh" style="top:398.30px;height:30.90px">13</div>
<div class="rh" style="top:429.20px;height:29.50px">14</div>
<div class="rh" style="top:458.70px;height:31.30px">15</div>
<div class="cell hd sel" style="left:32.70px;top:21.50px;width:57.80px;height:31.40px"><span class="ko">시간대</span></div>
<div class="cell hd sel" style="left:90.50px;top:21.50px;width:138.00px;height:31.40px"><span class="ko">매출액</span> <span class="ko">합계</span></div>
<div class="cell hd" style="left:228.50px;top:21.50px;width:107.75px;height:31.40px">BAG&ACC</div>
<div class="cell hd" style="left:336.25px;top:21.50px;width:106.25px;height:31.40px">CASUAL</div>
<div class="cell hd" style="left:442.50px;top:21.50px;width:108.00px;height:31.40px">KIDS & LIFE</div>
<div class="cell hd" style="left:550.50px;top:21.50px;width:107.00px;height:31.40px">MAN</div>
<div class="cell hd" style="left:657.50px;top:21.50px;width:106.75px;height:31.40px">WOMAN</div>
<div class="cell ctr" style="left:32.70px;top:52.90px;width:57.80px;height:31.40px">11<span class="ko">시</span></div>
<div class="cell num" style="left:90.50px;top:52.90px;width:135.20px;height:31.40px">343,903,908</div>
<div class="cell num" style="left:228.50px;top:52.90px;width:104.95px;height:31.40px">50,706,836</div>
<div class="cell num" style="left:336.25px;top:52.90px;width:103.45px;height:31.40px">68,770,242</div>
<div class="cell num" style="left:442.50px;top:52.90px;width:105.20px;height:31.40px">61,199,514</div>
<div class="cell num" style="left:550.50px;top:52.90px;width:104.20px;height:31.40px">67,642,243</div>
<div class="cell num" style="left:657.50px;top:52.90px;width:103.95px;height:31.40px">95,585,072</div>
<div class="cell ctr" style="left:32.70px;top:84.30px;width:57.80px;height:31.40px">12<span class="ko">시</span></div>
<div class="cell num" style="left:90.50px;top:84.30px;width:135.20px;height:31.40px">6,025,226</div>
<div class="cell num" style="left:228.50px;top:84.30px;width:104.95px;height:31.40px">0</div>
<div class="cell num" style="left:336.25px;top:84.30px;width:103.45px;height:31.40px">2,848,298</div>
<div class="cell num" style="left:442.50px;top:84.30px;width:105.20px;height:31.40px">0</div>
<div class="cell num" style="left:550.50px;top:84.30px;width:104.20px;height:31.40px">408,798</div>
<div class="cell num" style="left:657.50px;top:84.30px;width:103.95px;height:31.40px">2,768,130</div>
<div class="cell ctr" style="left:32.70px;top:115.70px;width:57.80px;height:31.40px">13<span class="ko">시</span></div>
<div class="cell num" style="left:90.50px;top:115.70px;width:135.20px;height:31.40px">176,053,475</div>
<div class="cell num" style="left:228.50px;top:115.70px;width:104.95px;height:31.40px">32,430,920</div>
<div class="cell num" style="left:336.25px;top:115.70px;width:103.45px;height:31.40px">25,659,259</div>
<div class="cell num" style="left:442.50px;top:115.70px;width:105.20px;height:31.40px">30,843,767</div>
<div class="cell num" style="left:550.50px;top:115.70px;width:104.20px;height:31.40px">34,856,849</div>
<div class="cell num" style="left:657.50px;top:115.70px;width:103.95px;height:31.40px">52,262,680</div>
<div class="cell ctr" style="left:32.70px;top:147.10px;width:57.80px;height:31.40px">14<span class="ko">시</span></div>
<div class="cell num" style="left:90.50px;top:147.10px;width:135.20px;height:31.40px">3,520,976</div>
<div class="cell num" style="left:228.50px;top:147.10px;width:104.95px;height:31.40px">555,052</div>
<div class="cell num" style="left:336.25px;top:147.10px;width:103.45px;height:31.40px">613,998</div>
<div class="cell num" style="left:442.50px;top:147.10px;width:105.20px;height:31.40px">423,641</div>
<div class="cell num" style="left:550.50px;top:147.10px;width:104.20px;height:31.40px">1,703,552</div>
<div class="cell num" style="left:657.50px;top:147.10px;width:103.95px;height:31.40px">224,734</div>
<div class="cell ctr" style="left:32.70px;top:178.50px;width:57.80px;height:31.40px">15<span class="ko">시</span></div>
<div class="cell num" style="left:90.50px;top:178.50px;width:135.20px;height:31.40px">180,393,426</div>
<div class="cell num" style="left:228.50px;top:178.50px;width:104.95px;height:31.40px">29,608,276</div>
<div class="cell num" style="left:336.25px;top:178.50px;width:103.45px;height:31.40px">30,939,235</div>
<div class="cell num" style="left:442.50px;top:178.50px;width:105.20px;height:31.40px">31,519,980</div>
<div class="cell num" style="left:550.50px;top:178.50px;width:104.20px;height:31.40px">36,732,463</div>
<div class="cell num" style="left:657.50px;top:178.50px;width:103.95px;height:31.40px">51,593,472</div>
<div class="cell ctr" style="left:32.70px;top:209.90px;width:57.80px;height:31.40px">16<span class="ko">시</span></div>
<div class="cell num" style="left:90.50px;top:209.90px;width:135.20px;height:31.40px">178,987,647</div>
<div class="cell num" style="left:228.50px;top:209.90px;width:104.95px;height:31.40px">27,528,898</div>
<div class="cell num" style="left:336.25px;top:209.90px;width:103.45px;height:31.40px">27,152,442</div>
<div class="cell num" style="left:442.50px;top:209.90px;width:105.20px;height:31.40px">31,051,872</div>
<div class="cell num" style="left:550.50px;top:209.90px;width:104.20px;height:31.40px">36,317,545</div>
<div class="cell num" style="left:657.50px;top:209.90px;width:103.95px;height:31.40px">56,936,891</div>
<div class="cell ctr" style="left:32.70px;top:241.30px;width:57.80px;height:31.40px">17<span class="ko">시</span></div>
<div class="cell num" style="left:90.50px;top:241.30px;width:135.20px;height:31.40px">2,019,679</div>
<div class="cell num" style="left:228.50px;top:241.30px;width:104.95px;height:31.40px">0</div>
<div class="cell num" style="left:336.25px;top:241.30px;width:103.45px;height:31.40px">0</div>
<div class="cell num" style="left:442.50px;top:241.30px;width:105.20px;height:31.40px">1,073,275</div>
<div class="cell num" style="left:550.50px;top:241.30px;width:104.20px;height:31.40px">492,804</div>
<div class="cell num" style="left:657.50px;top:241.30px;width:103.95px;height:31.40px">453,600</div>
<div class="cell ctr" style="left:32.70px;top:272.70px;width:57.80px;height:31.40px">18<span class="ko">시</span></div>
<div class="cell num" style="left:90.50px;top:272.70px;width:135.20px;height:31.40px">24,339,082</div>
<div class="cell num" style="left:228.50px;top:272.70px;width:104.95px;height:31.40px">3,100,831</div>
<div class="cell num" style="left:336.25px;top:272.70px;width:103.45px;height:31.40px">3,108,899</div>
<div class="cell num" style="left:442.50px;top:272.70px;width:105.20px;height:31.40px">2,293,315</div>
<div class="cell num" style="left:550.50px;top:272.70px;width:104.20px;height:31.40px">8,068,000</div>
<div class="cell num" style="left:657.50px;top:272.70px;width:103.95px;height:31.40px">7,768,037</div>
<div class="cell ctr" style="left:32.70px;top:304.10px;width:57.80px;height:31.40px">19<span class="ko">시</span></div>
<div class="cell num" style="left:90.50px;top:304.10px;width:135.20px;height:31.40px">185,704,223</div>
<div class="cell num" style="left:228.50px;top:304.10px;width:104.95px;height:31.40px">24,889,626</div>
<div class="cell num" style="left:336.25px;top:304.10px;width:103.45px;height:31.40px">31,368,984</div>
<div class="cell num" style="left:442.50px;top:304.10px;width:105.20px;height:31.40px">27,411,635</div>
<div class="cell num" style="left:550.50px;top:304.10px;width:104.20px;height:31.40px">35,744,504</div>
<div class="cell num" style="left:657.50px;top:304.10px;width:103.95px;height:31.40px">66,289,475</div>
<div class="cell ctr" style="left:32.70px;top:335.50px;width:57.80px;height:31.40px">20<span class="ko">시</span></div>
<div class="cell num" style="left:90.50px;top:335.50px;width:135.20px;height:31.40px">192,321,371</div>
<div class="cell num" style="left:228.50px;top:335.50px;width:104.95px;height:31.40px">28,796,191</div>
<div class="cell num" style="left:336.25px;top:335.50px;width:103.45px;height:31.40px">32,145,199</div>
<div class="cell num" style="left:442.50px;top:335.50px;width:105.20px;height:31.40px">31,460,969</div>
<div class="cell num" style="left:550.50px;top:335.50px;width:104.20px;height:31.40px">38,976,088</div>
<div class="cell num" style="left:657.50px;top:335.50px;width:103.95px;height:31.40px">60,942,924</div>
<div class="cell ctr" style="left:32.70px;top:366.90px;width:57.80px;height:31.40px">21<span class="ko">시</span></div>
<div class="cell num" style="left:90.50px;top:366.90px;width:135.20px;height:31.40px">169,027,081</div>
<div class="cell num" style="left:228.50px;top:366.90px;width:104.95px;height:31.40px">18,843,048</div>
<div class="cell num" style="left:336.25px;top:366.90px;width:103.45px;height:31.40px">42,644,563</div>
<div class="cell num" style="left:442.50px;top:366.90px;width:105.20px;height:31.40px">21,388,165</div>
<div class="cell num" style="left:550.50px;top:366.90px;width:104.20px;height:31.40px">27,503,291</div>
<div class="cell num" style="left:657.50px;top:366.90px;width:103.95px;height:31.40px">58,648,014</div>
<div class="cell ctr" style="left:32.70px;top:398.30px;width:57.80px;height:30.90px">22<span class="ko">시</span></div>
<div class="cell num" style="left:90.50px;top:398.30px;width:135.20px;height:30.90px">146,904,444</div>
<div class="cell num" style="left:228.50px;top:398.30px;width:104.95px;height:30.90px">15,543,981</div>
<div class="cell num" style="left:336.25px;top:398.30px;width:103.45px;height:30.90px">26,188,780</div>
<div class="cell num" style="left:442.50px;top:398.30px;width:105.20px;height:30.90px">26,539,214</div>
<div class="cell num" style="left:550.50px;top:398.30px;width:104.20px;height:30.90px">26,091,704</div>
<div class="cell num" style="left:657.50px;top:398.30px;width:103.95px;height:30.90px">52,540,765</div>
<div style="position:absolute;left:32.70px;top:52.20px;width:195.80px;height:1.4px;background:#9ea2aa"></div>
<div style="position:absolute;left:32.70px;top:83.60px;width:195.80px;height:1.4px;background:#9ea2aa"></div>
<div style="position:absolute;left:32.70px;top:115.00px;width:195.80px;height:1.4px;background:#9ea2aa"></div>
<div style="position:absolute;left:32.70px;top:146.40px;width:195.80px;height:1.4px;background:#9ea2aa"></div>
<div style="position:absolute;left:32.70px;top:177.80px;width:195.80px;height:1.4px;background:#9ea2aa"></div>
<div style="position:absolute;left:32.70px;top:209.20px;width:195.80px;height:1.4px;background:#9ea2aa"></div>
<div style="position:absolute;left:32.70px;top:240.60px;width:195.80px;height:1.4px;background:#9ea2aa"></div>
<div style="position:absolute;left:32.70px;top:272.00px;width:195.80px;height:1.4px;background:#9ea2aa"></div>
<div style="position:absolute;left:32.70px;top:303.40px;width:195.80px;height:1.4px;background:#9ea2aa"></div>
<div style="position:absolute;left:32.70px;top:334.80px;width:195.80px;height:1.4px;background:#9ea2aa"></div>
<div style="position:absolute;left:32.70px;top:366.20px;width:195.80px;height:1.4px;background:#9ea2aa"></div>
<div style="position:absolute;left:32.70px;top:397.60px;width:195.80px;height:1.4px;background:#9ea2aa"></div>
<div style="position:absolute;left:90.00px;top:21.50px;width:1px;height:407.70px;background:#9ea2aa"></div>
</div>
<div style="position:absolute;left:31px;top:242px;width:197px;height:406px;border:2px solid #ff0000;box-sizing:border-box"></div>
<div class="ab" style="left:0px;top:178px;width:103px;height:32px;border:2px solid #ff0000;box-sizing:border-box"></div>
<svg class="ab" style="left:0px;top:200px;" width="40" height="50" viewBox="0 0 40 50"><path d="M0.5 8.5L25 36" stroke="#ff0000" stroke-width="2.6"/><path d="M31.8 42.8L19 38.5L28.8 30.5Z" fill="#ff0000"/></svg>
</body></html>
